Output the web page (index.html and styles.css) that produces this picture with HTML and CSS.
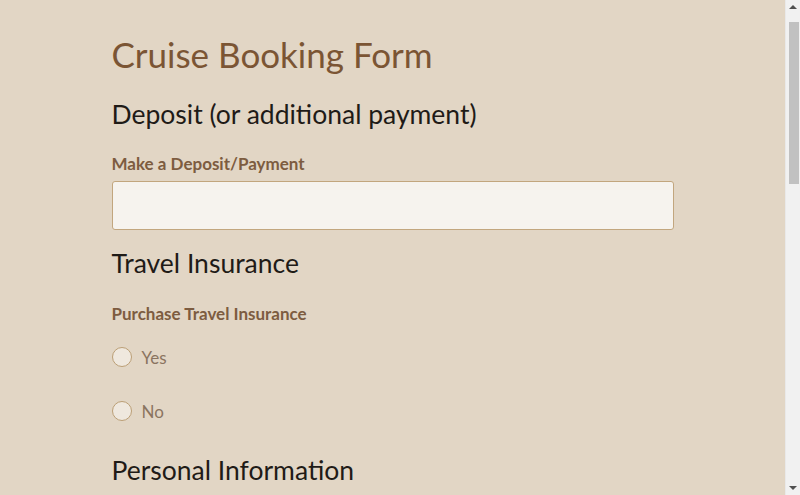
FILE: index.html
```html
<!DOCTYPE html>
<html lang="en">
<head>
<meta charset="utf-8">
<title>Cruise Booking Form</title>
<link rel="stylesheet" href="styles.css">
</head>
<body>
<main class="form">
  <h1 class="title">Cruise Booking Form</h1>

  <section class="section">
    <h2 class="heading first">Deposit (or additional payment)</h2>
    <label class="label" for="deposit">Make a Deposit/Payment</label>
    <input class="field" id="deposit" type="text">
  </section>

  <section class="section">
    <h2 class="heading">Travel Insurance</h2>
    <div class="label group">Purchase Travel Insurance</div>
    <label class="radio"><input type="radio" name="ins"><span class="dot"></span><span>Yes</span></label>
    <label class="radio"><input type="radio" name="ins"><span class="dot"></span><span>No</span></label>
  </section>

  <section class="section">
    <h2 class="heading after-radio">Personal Information</h2>
  </section>
</main>
<div class="scrollbar" aria-hidden="true">
  <span class="arrow up"></span>
  <span class="thumb"></span>
  <span class="arrow down"></span>
</div>
</body>
</html>
```

FILE: styles.css
```css
html, body {
  margin: 0;
  padding: 0;
}
body {
  background: #e2d6c5;
  font-family: "Lato", "Open Sans", sans-serif;
  color: #1f1b17;
  padding-right: 15px;
  min-height: 1400px;
}
.scrollbar {
  position: fixed;
  top: 0;
  right: 0;
  width: 15px;
  height: 100%;
  background: #f1f1f1;
  border-left: 1px solid #e9e9e9;
  box-sizing: border-box;
  display: flex;
  flex-direction: column;
  align-items: center;
}
.arrow {
  width: 0;
  height: 0;
  border-left: 4px solid transparent;
  border-right: 4px solid transparent;
}
.arrow.up {
  margin-top: 5px;
  border-bottom: 4px solid #505050;
}
.arrow.down {
  margin-top: auto;
  margin-bottom: 5px;
  border-top: 4px solid #505050;
}
.thumb {
  margin-top: 13px;
  width: 10px;
  height: 162px;
  background: #c1c1c1;
  margin-left: 2px;
}
.form {
  width: 562px;
  margin: 0 auto;
  padding: 32px 0 0;
  display: flex;
  flex-direction: column;
}
.title {
  margin: 0;
  font-size: 35px;
  font-weight: 400;
  color: #7b5534;
  line-height: 44px;
}
.section {
  display: flex;
  flex-direction: column;
}
.heading {
  margin: 16px 0 0;
  font-size: 26.5px;
  font-weight: 400;
  line-height: 34px;
  color: #1f1b17;
}
.heading.first {
  margin-top: 21px;
}
.heading.after-radio {
  margin-top: 30px;
}
.label {
  margin-top: 21px;
  font-size: 17px;
  font-weight: 700;
  color: #7d5c40;
  line-height: 24px;
}
.label.group {
  margin-top: 22px;
}
.field {
  margin: 5px 0 0;
  height: 49px;
  box-sizing: border-box;
  background: #f6f3ee;
  border: 1px solid #c2a67e;
  border-radius: 3px;
  font: inherit;
  padding: 0 12px;
}
.radio {
  display: flex;
  align-items: center;
  gap: 10px;
  height: 24px;
  font-size: 17px;
  color: #8a7460;
  margin-top: 19px;
}
.radio + .radio {
  margin-top: 30px;
}
.radio input {
  display: none;
}
.dot {
  width: 18px;
  height: 18px;
  border: 1px solid #bb9f76;
  border-radius: 50%;
  background: #efe8de;
}
```
